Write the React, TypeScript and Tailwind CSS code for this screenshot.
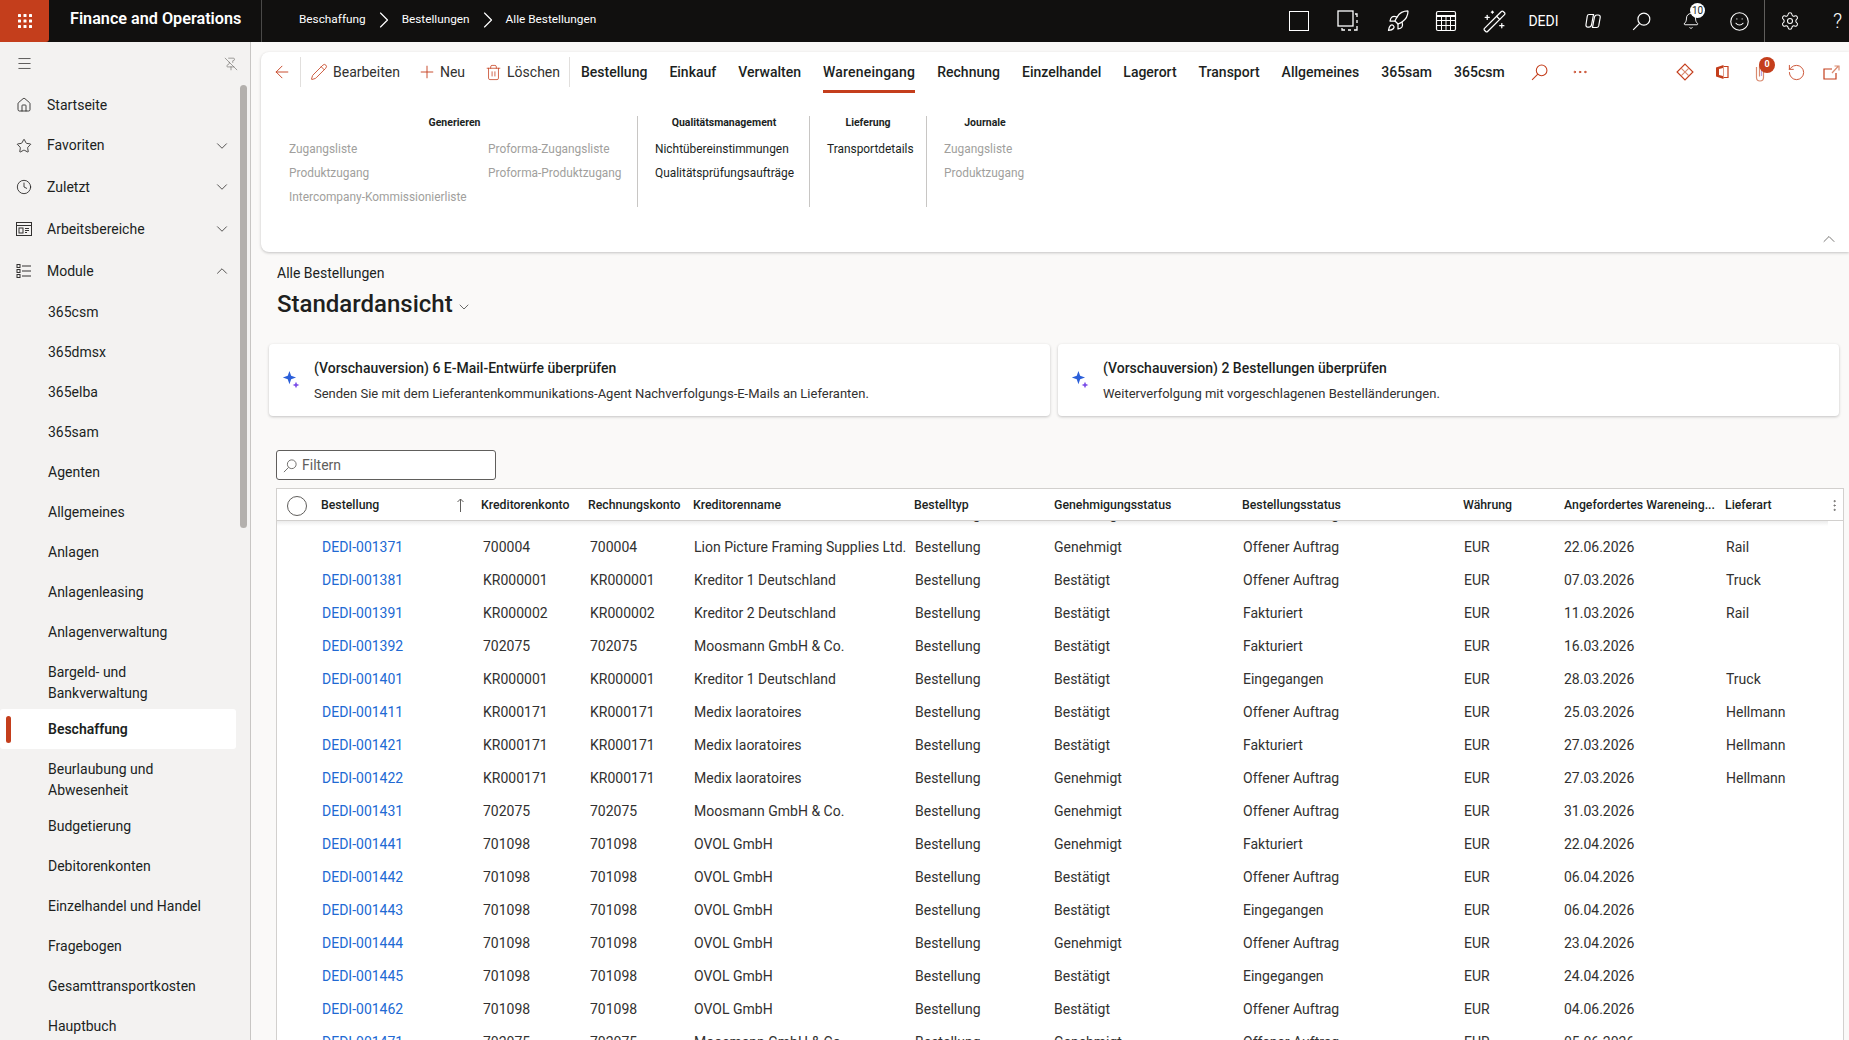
import type { ReactNode } from "react";
import {
  ArrowLeft,
  Bell,
  ChevronDown,
  ChevronRight,
  ChevronUp,
  Clock,
  Ellipsis,
  EllipsisVertical,
  Home,
  Menu,
  Pencil,
  PinOff,
  Plus,
  RotateCcw,
  Rocket,
  Settings,
  Smile,
  Star,
  Trash2,
  WandSparkles,
} from "lucide-react";

const Waffle = () => (
  <svg width="16" height="16" viewBox="0 0 16 16" fill="white">
    {[1, 6.5, 12].map((y) =>
      [1, 6.5, 12].map((x) => <rect key={`${x}-${y}`} x={x} y={y} width="3" height="3" rx="0.6" />),
    )}
  </svg>
);

// fluent style magnifier, handle at the lower left
const SearchIcon = ({ size, className }: { size: number; className?: string }) => (
  <svg width={size} height={size} viewBox="0 0 16 16" fill="none" stroke="currentColor" strokeWidth="1" className={className}>
    <circle cx="10" cy="6" r="5" />
    <path d="M6.400 9.600 1 15" />
  </svg>
);

const CopyDashed = () => (
  <svg width="24" height="24" viewBox="0 0 24 24" fill="none" stroke="white" strokeWidth="1.300">
    <rect x="2" y="2" width="15" height="15" />
    <path d="M19 5h2v3M21 11v3M21 17v4h-3M15 21h-3M9 21H6v-2" />
  </svg>
);

const TableGrid = () => (
  <svg width="22" height="22" viewBox="0 0 22 22" fill="none" stroke="white" strokeWidth="1">
    <rect x="1.500" y="1.500" width="19" height="19" rx="1.500" strokeWidth="1.200" />
    <path d="M1.500 6h19" strokeWidth="2" />
    <path d="M1.500 10.500h19M1.500 15.500h19M6.500 6v14.500M11 6v14.500M15.500 6v14.500" />
  </svg>
);

const CopilotMark = () => (
  <svg width="18" height="18" viewBox="0 0 18 18" fill="none" stroke="white" strokeWidth="1.200">
    <path d="M5 2.500h4.500L7.500 13c-.3 1.400-1 2.200-2.300 2.200H3.800C2.500 15.200 1.700 14 2 12.500L3.300 4C3.500 3 4 2.500 5 2.500Z" />
    <path d="M8.500 15.500h4.200c1 0 1.700-.6 2-1.600l1.500-8.400c.2-1.500-.6-2.500-2-2.500h-1.400c-1.200 0-2 .8-2.300 2L8.500 15.500Z" />
  </svg>
);

const PowerDiamond = () => (
  <svg width="18" height="18" viewBox="0 0 17 17" fill="none" stroke="#c43e1c" strokeWidth="1.100">
    <path d="M8.500 1 16 8.500 8.500 16 1 8.500Z" />
    <path d="m4.800 4.800 7.400 7.400M12.200 4.800l-7.400 7.400" stroke="#d98a6f" />
  </svg>
);

const OfficeMark = () => (
  <svg width="14" height="16" viewBox="0 0 14 16">
    <path d="M1 3.500 8.500 1v14L1 12.500Z" fill="#c43e1c" />
    <path d="M4 5v6l4 1V4Z" fill="white" />
    <path d="M8.500 2.500H13v11H8.500" fill="none" stroke="#c43e1c" strokeWidth="1.200" />
  </svg>
);

const ClipMark = () => (
  <svg width="10" height="19" viewBox="0 0 10 19" fill="none" stroke="#d98a6f" strokeWidth="1.200">
    <path d="M1.500 4v10.500a3.500 3.500 0 0 0 7 0V3a2 2 0 0 0-4 0v10.500" />
    <path d="M6.500 3v10" stroke="#b9a2e0" />
  </svg>
);

const OpenWindow = () => (
  <svg width="17" height="15" viewBox="0 0 17 15" fill="none" stroke="#c43e1c" strokeWidth="1.200">
    <path d="M9 4H1v10h12V8" />
    <path d="M9 8l6-6.500M11.500 1H16v4.500" stroke="#d98a6f" />
  </svg>
);

const SparkleMark = () => (
  <svg width="18" height="20" viewBox="0 0 16 18">
    <path d="M6 1 7.800 6.200 13 8 7.800 9.800 6 15 4.200 9.800-1 8 4.200 6.200Z" fill="#2b5fd9" transform="translate(1.500 0) scale(.85)" />
    <path d="M12.500 10.500 13.400 12.600 15.500 13.500 13.400 14.400 12.500 16.500 11.600 14.400 9.500 13.500 11.600 12.600Z" fill="#7b4ee8" />
  </svg>
);

const SortArrow = () => (
  <svg width="9" height="15" viewBox="0 0 9 15" fill="none" stroke="#605e5c" strokeWidth="1">
    <path d="M4.500 14V1M1.500 4l3-3 3 3" />
  </svg>
);

const ModuleIcon = () => (
  <svg width="16" height="16" viewBox="0 0 16 16" fill="none" stroke="#323130" strokeWidth="1">
    <rect x="1" y="1.500" width="3" height="3" />
    <rect x="1" y="6.500" width="3" height="3" />
    <rect x="1" y="11.500" width="3" height="3" />
    <path d="M6 3h9M6 8h9M6 13h9" />
  </svg>
);

const WorkspaceIcon = () => (
  <svg width="16" height="16" viewBox="0 0 16 16" fill="none" stroke="#323130" strokeWidth="1">
    <rect x="0.500" y="1.500" width="15" height="13" />
    <path d="M0.500 4.500h15" />
    <rect x="3" y="7" width="4" height="5" />
    <path d="M9 7.500h4M9 9.500h4M9 11.500h2" />
  </svg>
);

const topIcons = [
  <span key="a" className="block h-[20px] w-[20px] border-[1.5px] border-white" />,
  <CopyDashed key="b" />,
  <Rocket key="c" size={24} strokeWidth={1.250} className="ml-[2px]" />,
  <TableGrid key="d" />,
  <WandSparkles key="e" size={25} strokeWidth={1.200} />,
];

const navMain = [
  { label: "Startseite", icon: <Home size={16} strokeWidth={1.250} />, h: "h-10" },
  { label: "Favoriten", icon: <Star size={16} strokeWidth={1.250} />, h: "h-[41px]", chev: "down" },
  { label: "Zuletzt", icon: <Clock size={16} strokeWidth={1.250} />, h: "h-[42px]", chev: "down" },
  { label: "Arbeitsbereiche", icon: <WorkspaceIcon />, h: "h-[42px]", chev: "down" },
  { label: "Module", icon: <ModuleIcon />, h: "h-[42px]", chev: "up" },
];

const modules = [
  ["365csm"],
  ["365dmsx"],
  ["365elba"],
  ["365sam"],
  ["Agenten"],
  ["Allgemeines"],
  ["Anlagen"],
  ["Anlagenleasing"],
  ["Anlagenverwaltung"],
  ["Bargeld- und", "Bankverwaltung"],
  ["Beschaffung"],
  ["Beurlaubung und", "Abwesenheit"],
  ["Budgetierung"],
  ["Debitorenkonten"],
  ["Einzelhandel und Handel"],
  ["Fragebogen"],
  ["Gesamttransportkosten"],
  ["Hauptbuch"],
];

const tabs = [
  "Bestellung",
  "Einkauf",
  "Verwalten",
  "Wareneingang",
  "Rechnung",
  "Einzelhandel",
  "Lagerort",
  "Transport",
  "Allgemeines",
  "365sam",
  "365csm",
];

const moosmann = "Moosmann GmbH & Co.";
const medix = "Medix laoratoires";

const rows = [
  ["DEDI-001361", "700004", "700004", "Moosmann", "Bestellung", "Genehmigt", "Offener Auftrag", "EUR", "20.06.2026", "Rail"],
  ["DEDI-001371", "700004", "700004", "Lion Picture Framing Supplies Ltd.", "Bestellung", "Genehmigt", "Offener Auftrag", "EUR", "22.06.2026", "Rail"],
  ["DEDI-001381", "KR000001", "KR000001", "Kreditor 1 Deutschland", "Bestellung", "Bestätigt", "Offener Auftrag", "EUR", "07.03.2026", "Truck"],
  ["DEDI-001391", "KR000002", "KR000002", "Kreditor 2 Deutschland", "Bestellung", "Bestätigt", "Fakturiert", "EUR", "11.03.2026", "Rail"],
  ["DEDI-001392", "702075", "702075", moosmann, "Bestellung", "Bestätigt", "Fakturiert", "EUR", "16.03.2026", ""],
  ["DEDI-001401", "KR000001", "KR000001", "Kreditor 1 Deutschland", "Bestellung", "Bestätigt", "Eingegangen", "EUR", "28.03.2026", "Truck"],
  ["DEDI-001411", "KR000171", "KR000171", medix, "Bestellung", "Bestätigt", "Offener Auftrag", "EUR", "25.03.2026", "Hellmann"],
  ["DEDI-001421", "KR000171", "KR000171", medix, "Bestellung", "Bestätigt", "Fakturiert", "EUR", "27.03.2026", "Hellmann"],
  ["DEDI-001422", "KR000171", "KR000171", medix, "Bestellung", "Genehmigt", "Offener Auftrag", "EUR", "27.03.2026", "Hellmann"],
  ["DEDI-001431", "702075", "702075", moosmann, "Bestellung", "Genehmigt", "Offener Auftrag", "EUR", "31.03.2026", ""],
  ["DEDI-001441", "701098", "701098", "OVOL GmbH", "Bestellung", "Genehmigt", "Fakturiert", "EUR", "22.04.2026", ""],
  ["DEDI-001442", "701098", "701098", "OVOL GmbH", "Bestellung", "Bestätigt", "Offener Auftrag", "EUR", "06.04.2026", ""],
  ["DEDI-001443", "701098", "701098", "OVOL GmbH", "Bestellung", "Bestätigt", "Eingegangen", "EUR", "06.04.2026", ""],
  ["DEDI-001444", "701098", "701098", "OVOL GmbH", "Bestellung", "Genehmigt", "Offener Auftrag", "EUR", "23.04.2026", ""],
  ["DEDI-001445", "701098", "701098", "OVOL GmbH", "Bestellung", "Bestätigt", "Eingegangen", "EUR", "24.04.2026", ""],
  ["DEDI-001462", "701098", "701098", "OVOL GmbH", "Bestellung", "Bestätigt", "Offener Auftrag", "EUR", "04.06.2026", ""],
  ["DEDI-001471", "702075", "702075", moosmann, "Bestellung", "Genehmigt", "Offener Auftrag", "EUR", "05.06.2026", ""],
];

const headers = [
  "Kreditorenkonto",
  "Rechnungskonto",
  "Kreditorenname",
  "Bestelltyp",
  "Genehmigungsstatus",
  "Bestellungsstatus",
  "Währung",
  "Angefordertes Wareneing...",
  "Lieferart",
];

const TopBar = () => (
  <div className="flex h-[42px] shrink-0 items-center bg-[#11100f] text-white">
    <div className="flex h-[42px] w-[49px] items-center justify-center rounded-br-[3px] bg-[#c43e1c]">
      <Waffle />
    </div>
    <div className="w-[212px] pb-[3px] pl-[21px] text-[16.200px] font-semibold whitespace-nowrap">Finance and Operations</div>
    <div className="h-full border-l border-[#4a4948]" />
    <div className="flex items-center pb-[2px] pl-[37px] text-[11.800px]">
      <span>Beschaffung</span>
      <ChevronRight size={28} strokeWidth={1} className="mx-[4px]" />
      <span>Bestellungen</span>
      <ChevronRight size={28} strokeWidth={1} className="mx-[4px]" />
      <span>Alle Bestellungen</span>
    </div>
    <div className="ml-auto flex h-full items-center">
      {topIcons.map((icon, i) => (
        <div key={i} className="flex w-[49px] items-center justify-center">
          {icon}
        </div>
      ))}
      <div className="flex w-[49px] items-center justify-center text-[14px]">DEDI</div>
      <div className="flex w-[49px] items-center justify-center">
        <CopilotMark />
      </div>
      <div className="flex w-[49px] items-center justify-center">
        <SearchIcon size={19} />
      </div>
      <div className="relative flex w-[49px] items-center justify-center">
        <Bell size={18} strokeWidth={1.250} />
        <span className="absolute top-[-9px] left-[24px] flex h-[15px] w-[15px] items-center justify-center rounded-full bg-white text-[10px] text-[#201f1e]">
          10
        </span>
      </div>
      <div className="flex w-[49px] items-center justify-center">
        <Smile size={21} strokeWidth={1.250} />
      </div>
      <div className="h-full border-l border-[#605e5c]" />
      <div className="flex w-[49px] items-center justify-center">
        <Settings size={20} strokeWidth={1.250} />
      </div>
      <div className="flex w-[35px] items-center justify-center pl-[12px] text-[20px] font-light">?</div>
    </div>
  </div>
);

const Sidebar = () => (
  <aside className="flex w-[251px] shrink-0 overflow-hidden border-r border-[#c8c6c4] bg-[#f3f2f1] text-[14px] text-[#201f1e]">
    <div className="w-[240px] shrink-0">
      <div className="flex h-[43px] items-center justify-between pr-[2px] pl-[16px]">
        <Menu size={17} strokeWidth={1} />
        <PinOff size={14} strokeWidth={1} className="text-[#605e5c]" />
      </div>
      {navMain.map((item) => (
        <div key={item.label} className={`flex items-center pr-[9px] pl-[16px] ${item.h}`}>
          <span className="flex w-[31px] shrink-0">{item.icon}</span>
          <span>{item.label}</span>
          {item.chev === "down" && <ChevronDown size={18} strokeWidth={1} className="ml-auto" />}
          {item.chev === "up" && <ChevronUp size={18} strokeWidth={1} className="ml-auto" />}
        </div>
      ))}
      <div>
        {modules.map((lines) =>
          lines[0] === "Beschaffung" ? (
            <div key={lines[0]} className="relative mr-[4px] flex h-10 items-center rounded-[3px] bg-white pl-[48px] font-semibold">
              <span className="absolute top-[7px] left-[6px] h-[27px] w-[5px] rounded-full bg-[#c43e1c]" />
              Beschaffung
            </div>
          ) : lines.length === 2 ? (
            <div key={lines[0]} className="h-[57px] pt-[10px] pl-[48px] leading-[21px]">
              <div>{lines[0]}</div>
              <div>{lines[1]}</div>
            </div>
          ) : (
            <div key={lines[0]} className="flex h-10 items-center pl-[48px]">
              {lines[0]}
            </div>
          ),
        )}
      </div>
    </div>
    <div className="pt-[43px]">
      <div className="h-[443px] w-[7px] rounded-full bg-[#b3b0ad]" />
    </div>
  </aside>
);

const Group = ({ title, className, children }: { title: string; className: string; children: ReactNode }) => (
  <div className={`h-[91px] shrink-0 ${className}`}>
    <div className="mb-[10px] text-center text-[10.500px] leading-[14px] font-bold text-[#201f1e]">{title}</div>
    {children}
  </div>
);

const MenuLink = ({ label, off }: { label: string; off?: boolean }) => (
  <div className={`h-[24px] text-[11.900px] leading-[18px] whitespace-nowrap ${off ? "text-[#a19f9d]" : "text-[#201f1e]"}`}>
    {label}
  </div>
);

const CommandCard = () => (
  <div className="mt-[10px] ml-[10px] h-[200px] shrink-0 rounded-l-[8px] bg-white shadow-[0_1px_3px_rgba(0,0,0,0.22)]">
    <div className="flex h-[40px] items-center text-[14px] text-[#201f1e]">
      <div className="flex h-[30px] w-[40px] items-center justify-center border-r border-[#e1dfdd] pl-[2px] text-[#c43e1c]">
        <ArrowLeft size={20} strokeWidth={1.100} />
      </div>
      <div className="ml-[9px] flex items-center gap-[5px] text-[#323130]">
        <Pencil size={18} strokeWidth={1.100} className="text-[#c43e1c]" />
        Bearbeiten
      </div>
      <div className="ml-[17px] flex items-center gap-[3px] text-[#323130]">
        <Plus size={20} strokeWidth={1.100} className="text-[#c43e1c]" />
        Neu
      </div>
      <div className="ml-[20px] flex items-center gap-[5px] text-[#323130]">
        <Trash2 size={17} strokeWidth={1.100} className="text-[#c43e1c]" />
        Löschen
      </div>
      <div className="ml-[9px] h-[30px] border-l border-[#e1dfdd]" />
      <div className="ml-[11px] flex items-center gap-[22px] font-medium whitespace-nowrap">
        {tabs.map((t) =>
          t === "Wareneingang" ? (
            <div key={t} className="relative tracking-[0.2px]">
              {t}
              <span className="absolute right-0 bottom-[-10px] left-0 h-[3px] bg-[#c43e1c]" />
            </div>
          ) : (
            <div key={t}>{t}</div>
          ),
        )}
      </div>
      <SearchIcon size={17} className="ml-[26px] text-[#c43e1c]" />
      <Ellipsis size={18} strokeWidth={1.250} className="ml-[23px] text-[#c43e1c]" />
      <div className="mr-[9px] ml-auto flex items-center">
        <PowerDiamond />
        <span className="ml-[21px] flex">
          <OfficeMark />
        </span>
        <div className="relative ml-[26px] flex">
          <ClipMark />
          <span className="absolute top-[-6px] left-[4px] flex h-[16px] w-[16px] items-center justify-center rounded-full bg-[#c43e1c] text-[9px] font-bold text-white">
            0
          </span>
        </div>
        <RotateCcw size={19} strokeWidth={1.100} className="ml-[22px] text-[#c43e1c]" />
        <span className="ml-[17px] flex">
          <OpenWindow />
        </span>
      </div>
    </div>
    <div className="relative flex pt-[24px] pl-[28px]">
      <Group title="Generieren" className="w-[349px] border-r border-[#c8c6c4] pr-[17px]">
        <div className="grid grid-cols-[199px_1fr]">
          <MenuLink label="Zugangsliste" off />
          <MenuLink label="Proforma-Zugangsliste" off />
          <MenuLink label="Produktzugang" off />
          <MenuLink label="Proforma-Produktzugang" off />
          <MenuLink label="Intercompany-Kommissionierliste" off />
        </div>
      </Group>
      <Group title="Qualitätsmanagement" className="w-[172px] border-r border-[#c8c6c4] pr-[16px] pl-[17px]">
        <MenuLink label="Nichtübereinstimmungen" />
        <MenuLink label="Qualitätsprüfungsaufträge" />
      </Group>
      <Group title="Lieferung" className="w-[117px] border-r border-[#c8c6c4] px-[17px]">
        <MenuLink label="Transportdetails" />
      </Group>
      <Group title="Journale" className="w-[116px] px-[17px]">
        <MenuLink label="Zugangsliste" off />
        <MenuLink label="Produktzugang" off />
      </Group>
      <ChevronUp size={20} strokeWidth={1} className="absolute top-[137px] right-[10px] text-[#605e5c]" />
    </div>
  </div>
);

const InsightCard = ({ title, text }: { title: string; text: string }) => (
  <div className="flex h-[72px] min-w-0 flex-1 items-center rounded-[4px] bg-white pl-[13px] shadow-[0_1px_3px_rgba(0,0,0,0.22)]">
    <SparkleMark />
    <div className="ml-[14px] text-[#201f1e]">
      <div className="text-[14px] leading-[20px] font-medium">{title}</div>
      <div className="mt-[7px] text-[13px] leading-[18px] text-[#323130]">{text}</div>
    </div>
  </div>
);

const OrdersTable = () => (
  <div className="mt-[8px] mr-[5px] ml-[25px] flex min-h-0 flex-1 flex-col border-x border-[#d2d0ce] bg-white">
    <div className="grid h-[33px] shrink-0 grid-cols-[44px_160px_107px_105px_221px_140px_188px_221px_101px_161px_1fr] items-center border-y border-[#d2d0ce] pt-[2px] text-[12.300px] font-medium text-[#201f1e]">
      <span className="ml-[10px] h-[20px] w-[20px] rounded-full border border-[#605e5c]" />
      <div className="flex items-center justify-between pr-[16px]">
        Bestellung
        <SortArrow />
      </div>
      {headers.map((h, i) =>
        i === 8 ? (
          <div key={h} className="flex items-center justify-between pr-[1px]">
            {h}
            <EllipsisVertical size={15} strokeWidth={1.250} className="text-[#605e5c]" />
          </div>
        ) : (
          <div key={h} className="whitespace-nowrap">
            {h}
          </div>
        ),
      )}
    </div>
    <div className="relative min-h-0 flex-1 overflow-hidden">
      <div className="absolute top-0 right-[15px] left-0 h-[5px] bg-gradient-to-b from-[#ececec] to-transparent" />
      <div className="relative mt-[-23px] text-[14px] text-[#323130]">
        {rows.map((r) => (
          <div
            key={r[0]}
            className="grid h-[33px] grid-cols-[45px_161px_107px_104px_221px_139px_189px_221px_100px_162px_1fr] items-center whitespace-nowrap"
          >
            <span />
            <span className="text-[#2169d3]">{r[0]}</span>
            {r.slice(1).map((c, i) => (
              <span key={i}>{c}</span>
            ))}
          </div>
        ))}
      </div>
    </div>
  </div>
);

export default function App() {
  return (
    <div className="flex h-[1040px] w-[1849px] flex-col overflow-hidden bg-[#faf9f8] font-[Roboto,sans-serif]">
      <TopBar />
      <div className="flex min-h-0 flex-1">
        <Sidebar />
        <main className="flex min-w-0 flex-1 flex-col">
          <CommandCard />
          <div className="mt-[11px] ml-[26px] text-[14px] leading-[20px] text-[#201f1e]">Alle Bestellungen</div>
          <div className="mt-[5px] ml-[26px] flex items-center gap-[3px] text-[24px] leading-[32px] font-medium text-[#201f1e]">
            Standardansicht
            <ChevronDown size={16} strokeWidth={1} className="mt-[6px]" />
          </div>
          <div className="mt-[24px] mr-[10px] ml-[18px] flex gap-[8px]">
            <InsightCard
              title="(Vorschauversion) 6 E-Mail-Entwürfe überprüfen"
              text="Senden Sie mit dem Lieferantenkommunikations-Agent Nachverfolgungs-E-Mails an Lieferanten."
            />
            <InsightCard
              title="(Vorschauversion) 2 Bestellungen überprüfen"
              text="Weiterverfolgung mit vorgeschlagenen Bestelländerungen."
            />
          </div>
          <div className="mt-[34px] ml-[25px] flex h-[30px] w-[220px] items-center gap-[5px] rounded-[3px] border border-[#605e5c] bg-white pt-[1px] pl-[6px] text-[14px] text-[#605e5c]">
            <SearchIcon size={14} />
            Filtern
          </div>
          <OrdersTable />
        </main>
      </div>
    </div>
  );
}
